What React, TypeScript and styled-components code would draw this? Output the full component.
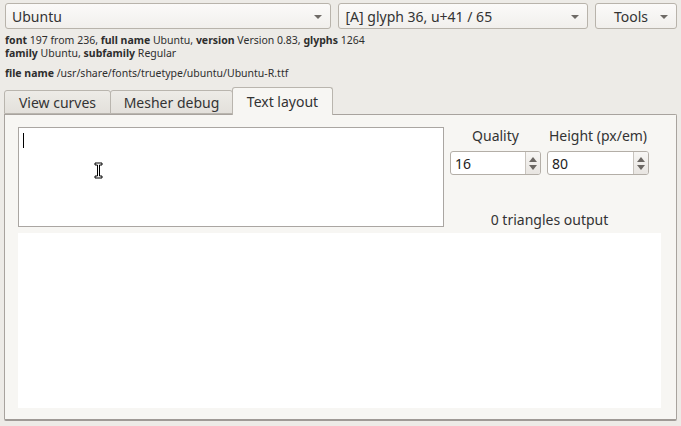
import styled, { createGlobalStyle } from "styled-components";

const GlobalStyle = createGlobalStyle`
  html, body {
    margin: 0;
    padding: 0;
    background: #edebe7;
  }
  body {
    font-family: "Noto Sans", "DejaVu Sans", sans-serif;
    color: #3c3c3c;
  }
`;

const Window = styled.div`
  width: 681px;
  height: 426px;
  box-sizing: border-box;
  padding: 3px 4px 0 4px;
  display: flex;
  flex-direction: column;
  overflow: hidden;
`;

const TopBar = styled.div`
  display: flex;
  gap: 7px;
  height: 26px;
  padding-left: 1px;
`;

const Combo = styled.div<{ $width: number }>`
  width: ${({ $width }) => $width}px;
  box-sizing: border-box;
  height: 26px;
  border: 1px solid #b8b3ab;
  border-radius: 3px;
  background: linear-gradient(#fbfaf9, #f1efec);
  display: flex;
  align-items: center;
  padding: 0 8px 0 6px;
  font-size: 14px;
  color: #333;
`;

const ComboText = styled.span<{ $center?: boolean }>`
  flex: 1;
  text-align: ${({ $center }) => ($center ? "center" : "left")};
  white-space: nowrap;
`;

const Arrow = styled.span`
  width: 0;
  height: 0;
  border-left: 4px solid transparent;
  border-right: 4px solid transparent;
  border-top: 4px solid #6e6a66;
  margin-top: 2px;
`;

const Info = styled.div`
  font-size: 10.5px;
  line-height: 13px;
  color: #2e2e2e;
  padding-left: 1px;
  white-space: nowrap;
  b {
    font-weight: 700;
  }
`;

const InfoBlock = styled(Info)`
  margin-top: 5px;
`;

const FileLine = styled(Info)`
  margin-top: 7px;
`;

const Tabs = styled.div`
  display: flex;
  align-items: flex-end;
  margin-top: 7px;
  padding-left: 1px;
  height: 27px;
  position: relative;
  z-index: 1;
`;

const Tab = styled.div<{ $active?: boolean; $width: number }>`
  width: ${({ $width }) => $width}px;
  box-sizing: border-box;
  height: ${({ $active }) => ($active ? 28 : 24)}px;
  margin-bottom: ${({ $active }) => ($active ? -1 : 0)}px;
  border: 1px solid #b9b5ae;
  border-bottom: ${({ $active }) => ($active ? "none" : "1px solid #b9b5ae")};
  border-radius: 3px 3px 0 0;
  background: ${({ $active }) => ($active ? "#f7f6f3" : "linear-gradient(#edebe7, #e3e0db)")};
  display: flex;
  align-items: center;
  justify-content: center;
  font-size: 14px;
  color: #333;
  margin-left: -1px;
  padding-top: ${({ $active }) => ($active ? 0 : 1)}px;
`;

const Panel = styled.div`
  flex: none;
  height: 307px;
  box-sizing: border-box;
  border: 1px solid #a8a39e;
  border-bottom: 2px solid #9f9a96;
  border-radius: 0 2px 2px 2px;
  background: #f7f6f3;
  padding: 12px 15px 11px 13px;
  display: flex;
  flex-direction: column;
  gap: 6px;
`;

const Upper = styled.div`
  display: flex;
  gap: 6px;
  height: 100px;
`;

const TextArea = styled.div`
  width: 426px;
  height: 100px;
  box-sizing: border-box;
  border: 1px solid #aaa6a2;
  background: #fff;
  position: relative;
`;

const Caret = styled.div`
  position: absolute;
  left: 4px;
  top: 5px;
  width: 1px;
  height: 15px;
  background: #000;
`;

const Pointer = styled.svg`
  position: absolute;
  left: 75px;
  top: 34px;
`;

const Controls = styled.div`
  width: 199px;
  display: flex;
  flex-direction: column;
`;

const SpinRow = styled.div`
  display: flex;
  gap: 6px;
  padding-top: 1px;
`;

const SpinGroup = styled.div<{ $width: number }>`
  width: ${({ $width }) => $width}px;
  display: flex;
  flex-direction: column;
  align-items: center;
  gap: 7px;
`;

const Label = styled.div`
  font-size: 14px;
  line-height: 16px;
  color: #333;
`;

const Spin = styled.div`
  width: 100%;
  height: 24px;
  box-sizing: border-box;
  border: 1px solid #b3aea7;
  border-radius: 3px;
  background: #fff;
  display: flex;
  align-items: center;
  padding-left: 4px;
  font-size: 14px;
  color: #222;
`;

const SpinValue = styled.span`
  flex: 1;
`;

const SpinButtons = styled.div`
  width: 14px;
  height: 22px;
  border-left: 1px solid #c8c4be;
  background: linear-gradient(#f7f6f4, #e8e5e1);
  border-radius: 0 2px 2px 0;
  display: flex;
  flex-direction: column;
  align-items: center;
  justify-content: center;
  gap: 3px;
`;

const UpTri = styled.span`
  width: 0;
  height: 0;
  border-left: 4px solid transparent;
  border-right: 4px solid transparent;
  border-bottom: 5px solid #6b6763;
`;

const DownTri = styled.span`
  width: 0;
  height: 0;
  border-left: 4px solid transparent;
  border-right: 4px solid transparent;
  border-top: 5px solid #6b6763;
`;

const Output = styled.div`
  margin-top: auto;
  text-align: center;
  font-size: 14px;
  line-height: 16px;
  color: #333;
  margin-bottom: -1px;
`;

const Canvas = styled.div`
  flex: 1;
  background: #fff;
`;

const SpinBox = ({ label, value, width }: { label: string; value: string; width: number }) => (
  <SpinGroup $width={width}>
    <Label>{label}</Label>
    <Spin>
      <SpinValue>{value}</SpinValue>
      <SpinButtons>
        <UpTri />
        <DownTri />
      </SpinButtons>
    </Spin>
  </SpinGroup>
);

export default function App() {
  return (
    <>
      <GlobalStyle />
      <Window>
        <TopBar>
          <Combo $width={327}>
            <ComboText>Ubuntu</ComboText>
            <Arrow />
          </Combo>
          <Combo $width={250}>
            <ComboText>[A] glyph 36, u+41 / 65</ComboText>
            <Arrow />
          </Combo>
          <Combo $width={82}>
            <ComboText $center>Tools</ComboText>
            <Arrow />
          </Combo>
        </TopBar>
        <InfoBlock>
          <div>
            <b>font</b> 197 from 236, <b>full name</b> Ubuntu, <b>version</b> Version 0.83, <b>glyphs</b> 1264
          </div>
          <div>
            <b>family</b> Ubuntu, <b>subfamily</b> Regular
          </div>
        </InfoBlock>
        <FileLine>
          <b>file name</b> /usr/share/fonts/truetype/ubuntu/Ubuntu-R.ttf
        </FileLine>
        <Tabs>
          <Tab $width={107}>View curves</Tab>
          <Tab $width={123}>Mesher debug</Tab>
          <Tab $width={101} $active>
            Text layout
          </Tab>
        </Tabs>
        <Panel>
          <Upper>
            <TextArea>
              <Caret />
              <Pointer width="9" height="17" viewBox="0 0 9 17">
                <path
                  d="M1 1h7v2H5.5v11H8v2H1v-2h2.5V3H1z"
                  fill="#fff"
                  stroke="#000"
                  strokeWidth="1"
                />
              </Pointer>
            </TextArea>
            <Controls>
              <SpinRow>
                <SpinBox label="Quality" value="16" width={91} />
                <SpinBox label="Height (px/em)" value="80" width={102} />
              </SpinRow>
              <Output>0 triangles output</Output>
            </Controls>
          </Upper>
          <Canvas />
        </Panel>
      </Window>
    </>
  );
}
